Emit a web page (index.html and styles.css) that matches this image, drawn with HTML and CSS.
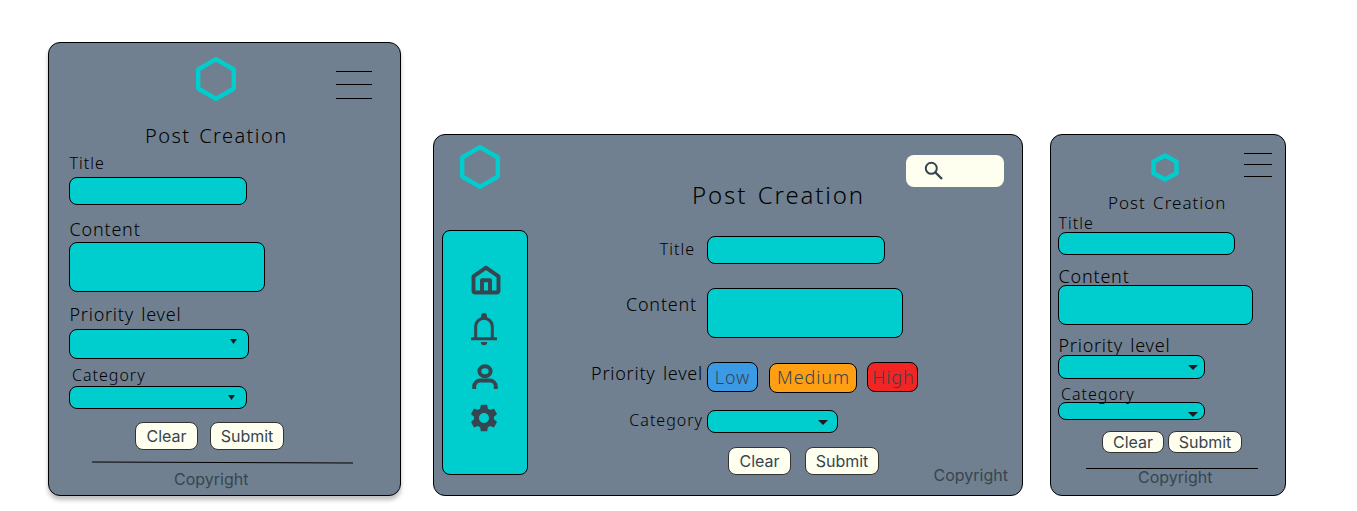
FILE: index.html
```
<!DOCTYPE html>
<html lang="en">
<head>
<meta charset="utf-8">
<title>Post Creation</title>
<link rel="stylesheet" href="styles.css">
</head>
<body>
<main class="board">

  <section class="card mobile">
    <header class="bar">
      <svg class="logo" width="40" height="44" viewBox="0 0 40 44"><path d="M20 2.200 37.800 12.500V31.500L20 41.800 2.200 31.500V12.500Z"/></svg>
      <div class="burger"><i></i><i></i><i></i></div>
    </header>
    <h1 class="heading">Post Creation</h1>
    <form class="form">
      <div class="field title"><label class="label small">Title</label><div class="box"></div></div>
      <div class="field content"><label class="label">Content</label><div class="box"></div></div>
      <div class="field priority"><label class="label wide">Priority level</label><div class="box select"><i class="arrow"></i></div></div>
      <div class="field category"><label class="label small">Category</label><div class="box select"><i class="arrow"></i></div></div>
    </form>
    <div class="actions"><button class="btn clear">Clear</button><button class="btn submit">Submit</button></div>
    <svg class="rule" width="261" height="3" viewBox="0 0 261 3"><path d="M0 1 261 2"/></svg>
    <footer class="copyright">Copyright</footer>
  </section>

  <section class="card desktop">
    <aside class="side">
      <svg class="logo" width="40" height="44" viewBox="0 0 40 44"><path d="M20 2.200 37.800 12.500V31.500L20 41.800 2.200 31.500V12.500Z"/></svg>
      <nav class="nav">
        <svg class="home" width="30" height="30" viewBox="0 0 30 30"><path class="stroke4" d="M2.500 11.300 15 2.700 27.500 11.300V25.500a2 2 0 0 1-2 2h-21a2 2 0 0 1-2-2Z"/><path class="stroke4" d="M11 27V15.200h8V27"/></svg>
        <svg class="bell" width="28" height="33" viewBox="0 0 28 33"><path class="stroke3" d="M5.700 25V13.500a8.300 8.300 0 0 1 16.600 0V25"/><path class="fill" d="M1 24.300h26v3H1ZM11 5V3a3 3 0 0 1 6 0v2ZM10.800 29h6.400a3.200 3.200 0 0 1-6.400 0Z"/></svg>
        <svg class="person" width="26" height="26" viewBox="0 0 26 26"><ellipse class="stroke4" cx="13" cy="7.200" rx="5.600" ry="5"/><path class="stroke4" d="M2.200 25v-2.500a6 6 0 0 1 6-6h9.600a6 6 0 0 1 6 6V25"/></svg>
        <svg class="gear" width="28" height="28" viewBox="1.900 1.900 20.200 20.200"><path class="fill" d="M19.140 12.940c.04-.3.060-.61.060-.94 0-.32-.02-.64-.07-.94l2.030-1.580c.18-.14.230-.41.120-.61l-1.920-3.320c-.12-.22-.37-.29-.59-.22l-2.390.96c-.5-.38-1.030-.7-1.620-.94l-.36-2.540c-.04-.24-.24-.41-.48-.41h-3.840c-.24 0-.43.170-.47.410l-.36 2.540c-.59.240-1.130.57-1.620.94l-2.390-.96c-.22-.08-.47 0-.59.220L2.740 8.870c-.12.210-.08.470.12.610l2.030 1.580c-.05.3-.09.630-.09.940s.02.640.07.940l-2.030 1.580c-.18.140-.23.410-.12.610l1.920 3.320c.12.220.37.290.59.220l2.390-.96c.5.380 1.030.7 1.620.94l.36 2.540c.05.240.24.410.48.410h3.840c.24 0 .44-.17.470-.41l.36-2.540c.59-.24 1.130-.56 1.620-.94l2.390.96c.22.080.47 0 .59-.22l1.920-3.320c.12-.22.070-.47-.12-.61l-2.010-1.580zM12 15.600c-1.980 0-3.600-1.620-3.600-3.600s1.620-3.600 3.600-3.600 3.600 1.620 3.600 3.600-1.620 3.600-3.600 3.600z"/></svg>
      </nav>
    </aside>
    <div class="main">
      <header class="top">
        <h1 class="heading">Post Creation</h1>
        <div class="search"><svg width="20" height="20" viewBox="0 0 20 20"><circle class="stroke2" cx="7.300" cy="7.300" r="5.500"/><path class="stroke25" d="m11.500 11.500 6.500 6.500"/></svg></div>
      </header>
      <form class="form">
        <div class="field title"><label class="label small">Title</label><div class="box"></div></div>
        <div class="field content"><label class="label">Content</label><div class="box"></div></div>
        <div class="field priority"><label class="label wide">Priority level</label><div class="pills"><span class="pill low">Low</span><span class="pill medium">Medium</span><span class="pill high">High</span></div></div>
        <div class="field category"><label class="label small">Category</label><div class="box select"><i class="arrow"></i></div></div>
      </form>
      <div class="bottom">
        <button class="btn clear">Clear</button><button class="btn submit">Submit</button>
        <footer class="copyright">Copyright</footer>
      </div>
    </div>
  </section>

  <section class="card compact">
    <header class="bar">
      <svg class="logo" width="28" height="30" viewBox="0 0 28 30"><path d="M14 2.500 25.500 8.800V20.200L14 26.500 2.500 20.200V8.800Z"/></svg>
      <div class="burger"><i></i><i></i><i></i></div>
    </header>
    <h1 class="heading">Post Creation</h1>
    <form class="form">
      <div class="field title"><label class="label small">Title</label><div class="box"></div></div>
      <div class="field content"><label class="label">Content</label><div class="box"></div></div>
      <div class="field priority"><label class="label wide">Priority level</label><div class="box select"><i class="arrow"></i></div></div>
      <div class="field category"><label class="label small">Category</label><div class="box select"><i class="arrow"></i></div></div>
    </form>
    <div class="actions"><button class="btn clear">Clear</button><button class="btn submit">Submit</button></div>
    <svg class="rule" width="172" height="1" viewBox="0 0 172 1"><path d="M0 .5H172"/></svg>
    <footer class="copyright">Copyright</footer>
  </section>

</main>
</body>
</html>
```
FILE: styles.css
```
* { box-sizing: border-box; }
body { margin: 0; background: #fff; color: #000; font-family: Inter, sans-serif; }
svg { display: block; flex: none; }

.board { display: flex; align-items: flex-end; height: 511px; padding: 0 0 15px 48px; }
.card { flex: none; background: #708090; border: 1px solid #000; border-radius: 12px; display: flex; }
.mobile { width: 353px; height: 454px; flex-direction: column; box-shadow: 0 4px 4px rgba(0, 0, 0, .25); }
.desktop { width: 590px; height: 362px; margin-left: 32px; }
.compact { width: 236px; height: 362px; margin-left: 27px; flex-direction: column; }

.logo { fill: none; stroke: #00cdcd; stroke-width: 4.400; stroke-linejoin: round; }
.burger { display: flex; flex-direction: column; }
.burger i { height: 1px; background: #000; }

.heading, .label, .pill { font-family: "Noto Sans", sans-serif; font-weight: 300; white-space: nowrap; }
.heading { margin: 0; letter-spacing: .072em; word-spacing: .1em; }
.label { display: block; flex: none; height: 20px; font-size: 18px; line-height: 22px; letter-spacing: .8px; }
.label.small { font-size: 16px; letter-spacing: 1px; }
.label.wide { letter-spacing: .75px; word-spacing: 2px; }

.box { flex: none; background: #00cdcd; border: 1px solid #000; border-radius: 8px; }
.select { display: flex; justify-content: flex-end; align-items: flex-start; }
.arrow { width: 10px; height: 5px; background: #1d1b20; clip-path: polygon(0 0, 100% 0, 50% 100%); }

.btn { flex: none; height: 28px; padding: 0; border: 1px solid #333; border-radius: 8px; background: #fffff0; color: #36454f; font: 16px/26px Inter, sans-serif; }
.clear { width: 63px; }
.submit { width: 74px; }
.actions { display: flex; }
.rule { stroke: #000; stroke-width: 1; }
.copyright { color: #36454f; font-size: 16px; line-height: 20px; }

/* tall phone card */
.mobile .bar { display: flex; height: 80px; padding: 14px 28px 0 147px; justify-content: space-between; }
.mobile .burger { width: 36px; margin-top: 14px; }
.mobile .burger i + i { margin-top: 12px; }
.mobile .burger i:last-child { margin-top: 13px; }
.mobile .heading { height: 24px; margin-left: 96px; font-size: 20px; line-height: 26px; }
.mobile .form { padding: 5px 0 0 20px; }
.mobile .label { margin-left: .5px; }
.mobile .title .box { width: 178px; height: 28px; margin-top: 5px; }
.mobile .content { margin-top: 13px; }
.mobile .content .box { width: 196px; height: 50px; margin-top: 4px; }
.mobile .priority { margin-top: 11px; }
.mobile .priority .box { width: 180px; height: 30px; margin-top: 6px; padding: 9px 11px 0 0; }
.mobile .category { margin-top: 5px; }
.mobile .category .label { margin-left: 3px; }
.mobile .category .box { width: 178px; height: 23px; margin-top: 2px; padding: 8px 11px 0 0; }
.mobile .arrow { width: 7px; }
.mobile .actions { gap: 12px; margin: 13px 0 0 86px; }
.mobile .rule { margin: 11px 0 0 43px; }
.mobile .copyright { margin: 5px 0 0 125px; }

/* small phone card */
.compact .bar { display: flex; height: 57px; padding: 18px 13px 0 100px; justify-content: space-between; }
.compact .burger { width: 28px; }
.compact .burger i + i { margin-top: 10px; }
.compact .burger i:last-child { margin-top: 11px; }
.compact .heading { height: 20px; margin-left: 57px; font-size: 17px; line-height: 22px; letter-spacing: .06em; }
.compact .form { padding-left: 7px; }
.compact .label { margin-left: .5px; }
.compact .title .box { width: 177px; height: 23px; }
.compact .content { margin-top: 10px; }
.compact .content .box { width: 195px; height: 40px; }
.compact .priority { margin-top: 9px; }
.compact .priority .box { width: 147px; height: 24px; margin-top: 1px; padding: 9px 6px 0 0; }
.compact .category { margin-top: 4px; }
.compact .category .label { margin-left: 3px; }
.compact .category .box { width: 147px; height: 18px; margin-top: -1px; padding: 9px 6px 0 0; }
.compact .actions { gap: 4px; margin: 11px 0 0 51px; }
.compact .btn { height: 22px; line-height: 20px; }
.compact .clear { width: 62px; }
.compact .rule { margin: 15px 0 0 35px; }
.compact .copyright { margin: -2px 0 0 87px; }

/* desktop card */
.side { width: 94px; padding: 10px 0 0 8px; }
.side .logo { margin-left: 18px; }
.nav { width: 86px; height: 245px; margin-top: 41px; padding: 34px 0 0 27px; background: #00cdcd; border: 1px solid #000; border-radius: 8px; }
.nav .home { margin-left: .5px; }
.nav .bell { margin-top: 18px; }
.nav .person { margin: 18px 0 0 2px; }
.nav .gear { margin-top: 14px; }
.fill { fill: #36454f; }
.stroke2, .stroke25, .stroke3, .stroke4 { fill: none; stroke: #36454f; stroke-linejoin: round; }
.stroke2 { stroke-width: 2; }
.stroke25 { stroke-width: 2.400; }
.stroke3 { stroke-width: 3; }
.stroke4 { stroke-width: 3.900; }

.main { flex: 1; padding-top: 20px; }
.top { display: flex; align-items: flex-start; justify-content: space-between; height: 81px; padding: 0 18px 0 164px; }
.desktop .heading { margin-top: 25px; font-size: 24px; line-height: 30px; letter-spacing: .078em; }
.search { width: 98px; height: 32px; padding: 6px 0 0 18px; border-radius: 8px; background: #fffff0; }
.desktop .field { display: flex; }
.desktop .label { width: 179px; text-align: right; }
.desktop .title .label { padding-right: 12px; margin-top: 2px; }
.desktop .title .box { width: 178px; height: 28px; }
.desktop .content { margin-top: 24px; }
.desktop .content .label { padding-right: 10px; margin-top: 5px; }
.desktop .content .box { width: 196px; height: 50px; }
.desktop .priority { margin-top: 24px; }
.desktop .priority .label { padding-right: 4px; }
.pills { display: flex; height: 31px; }
.pill { flex: none; height: 30px; border: 1px solid #000; border-radius: 8px; color: #36454f; font-size: 18px; line-height: 28px; letter-spacing: .9px; text-align: center; }
.low { width: 51px; background: #3b9ae5; }
.medium { width: 88px; margin: 1px 10px 0 11px; padding-left: 1px; background: #ff9f14; line-height: 26px; }
.high { width: 51px; padding-left: 2px; background: #f22424; }
.desktop .category { margin-top: 17px; }
.desktop .category .label { padding-right: 4px; line-height: 20px; }
.desktop .category .box { width: 131px; height: 23px; padding: 9px 9px 0 0; }
.bottom { display: flex; align-items: flex-start; margin-top: 14px; padding: 0 14px 0 200px; }
.bottom .submit { margin-left: 14px; }
.bottom .copyright { margin: 18px 0 0 auto; }
```
